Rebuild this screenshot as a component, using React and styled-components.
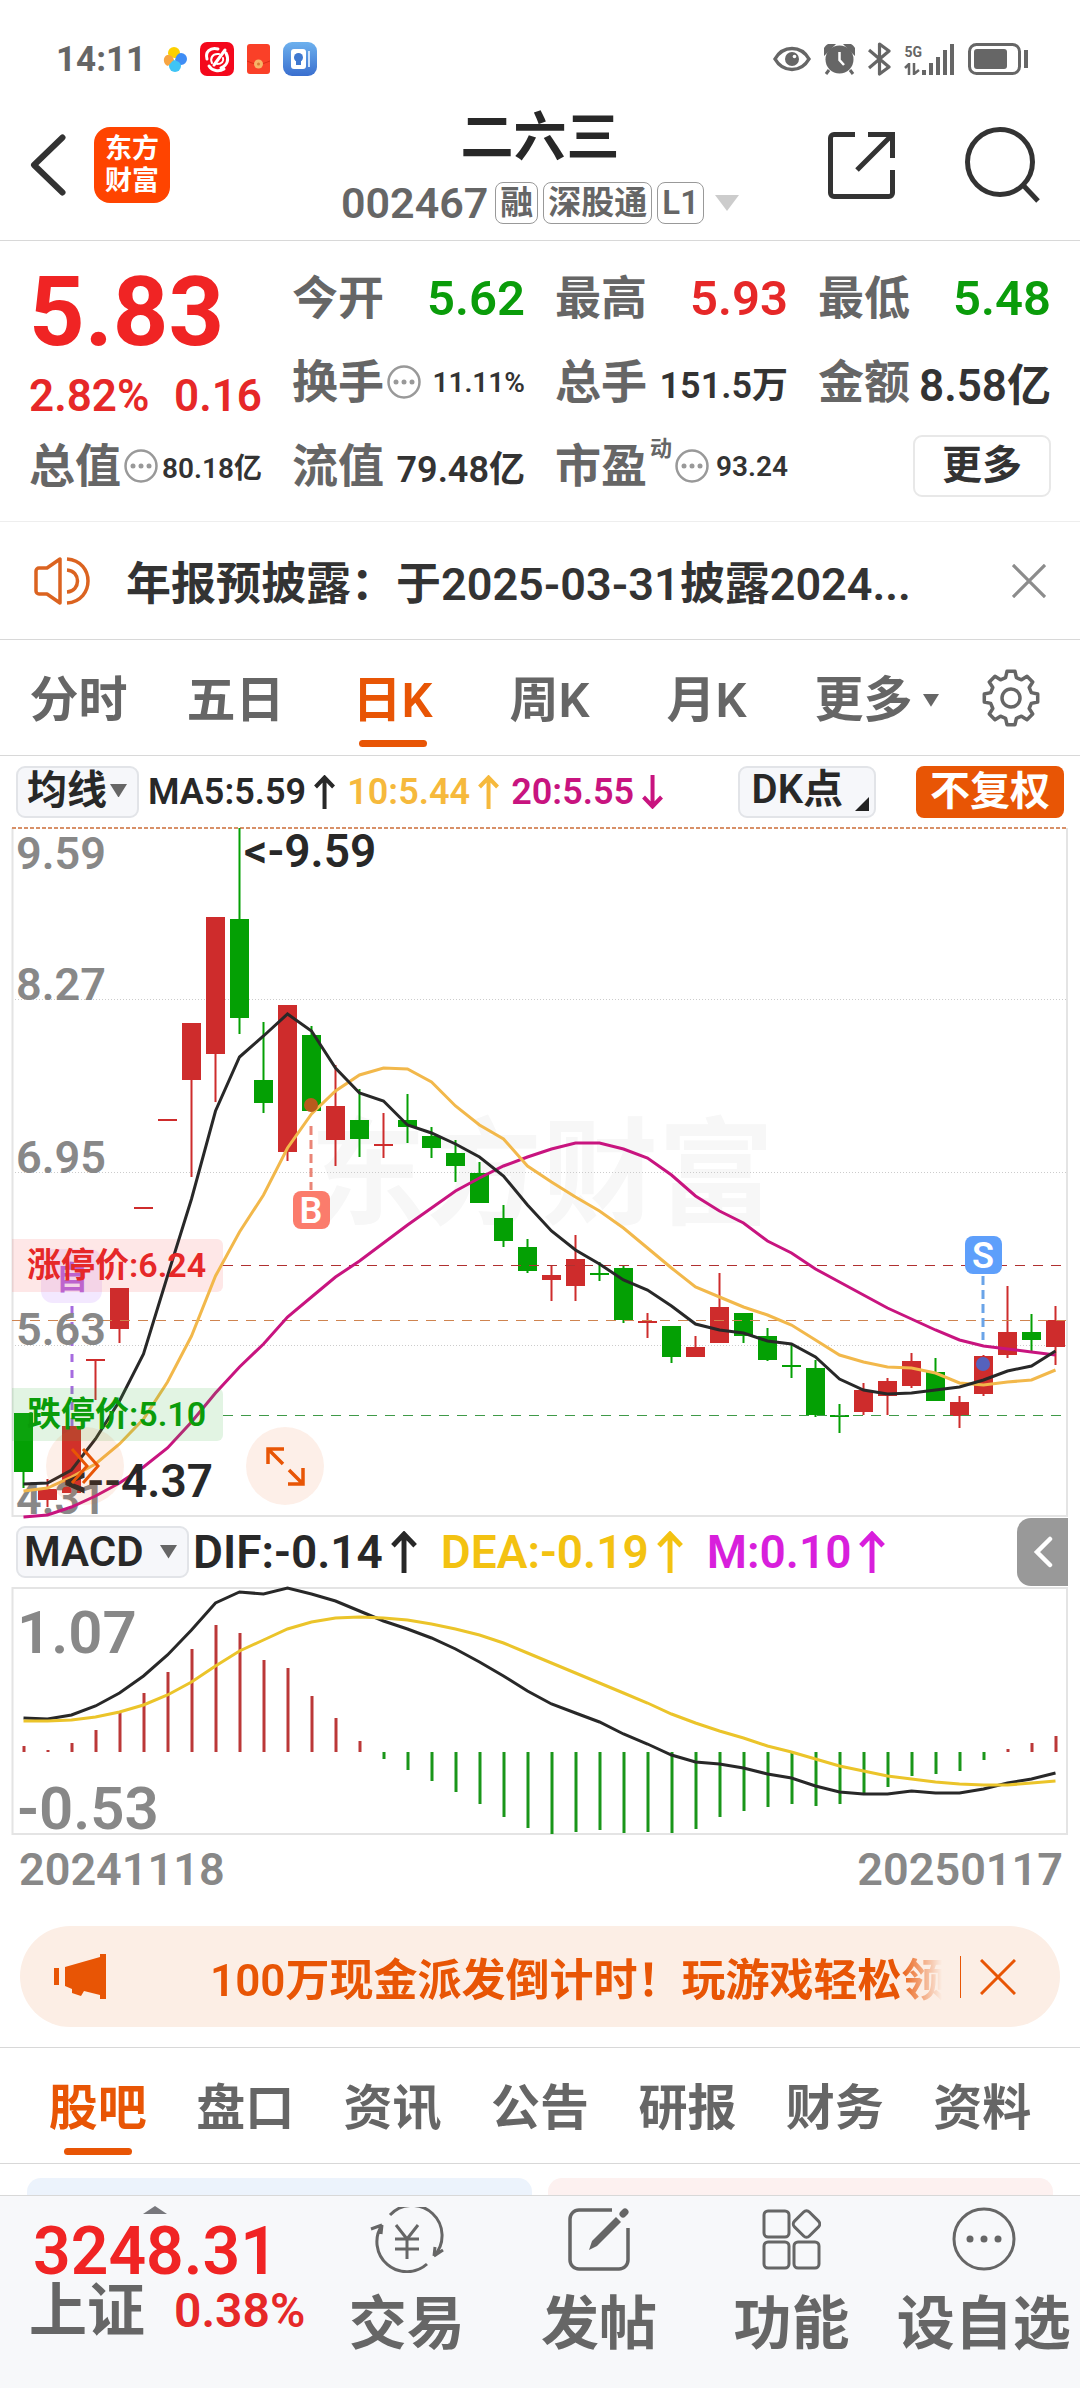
import React from "react";
import styled, { createGlobalStyle } from "styled-components";

const color = {
  ink: "#282828",
  text: "#333333",
  muted: "#666666",
  faint: "#888888",
  line: "#d8d8d8",
  frame: "#e4e4e4",
  up: "#e62828",
  down: "#0a9c0a",
  brand: "#e85505",
  ma10: "#f6b93c",
  ma20: "#c8147f",
  dea: "#f3c211",
  macd: "#d81fdc",
  chip: "#f6f7fa",
};

const GlobalStyle = createGlobalStyle`
  *, *::before, *::after { box-sizing: border-box; }
  body {
    margin: 0;
    background: #fff;
    color: ${color.text};
    font-family: Roboto, "Noto Sans CJK SC", sans-serif;
    font-weight: 600;
  }
  button, select {
    margin: 0;
    padding: 0;
    border: 0;
    background: none;
    color: inherit;
    font: inherit;
    cursor: pointer;
  }
  svg { display: block; flex: none; }
`;

const Page = styled.div`
  display: flex;
  flex-direction: column;
  min-height: 100vh;
`;

/* ---------- status bar ---------- */

const StatusBar = styled.div`
  display: flex;
  align-items: center;
  justify-content: space-between;
  height: 104px;
  padding: 14px 52px 0 56px;
  color: ${color.muted};
`;

const StatusGroup = styled.div`
  display: flex;
  align-items: center;
  gap: 13px;
`;

const Clock = styled.time`
  margin-right: 3px;
  font-size: 35px;
  font-weight: 700;
`;

const Network = styled.div`
  display: flex;
  align-items: flex-end;
`;

const NetworkType = styled.div`
  display: flex;
  flex-direction: column;
  gap: 4px;
  font-size: 14px;
  font-weight: 700;
  line-height: 14px;
`;

/* ---------- header ---------- */

const Header = styled.header`
  display: grid;
  grid-template-columns: 1fr auto 1fr;
  align-items: center;
  height: 137px;
  padding: 0 30px 14px;
  border-bottom: 1px solid ${color.line};
`;

const HeaderSide = styled.div`
  display: flex;
  align-items: center;
  justify-content: ${(p) => (p.$end ? "flex-end" : "flex-start")};
  gap: ${(p) => (p.$end ? 70 : 28)}px;
  padding-right: ${(p) => (p.$end ? 9 : 0)}px;
`;

const AppLogo = styled.a`
  display: grid;
  place-content: center;
  width: 76px;
  height: 76px;
  border-radius: 16px;
  background: #ff4400;
  color: #fff;
  font-size: 27px;
  font-weight: 700;
  line-height: 32px;
  text-decoration: none;
`;

const TitleBlock = styled.div`
  display: flex;
  flex-direction: column;
  align-items: center;
  gap: 13px;
`;

const Title = styled.h1`
  margin: 0;
  color: ${color.ink};
  font-size: 53px;
  font-weight: 700;
  line-height: 62px;
`;

const SubTitle = styled.div`
  display: flex;
  align-items: center;
  gap: 5px;
  color: ${color.muted};
`;

const Code = styled.span`
  margin-right: 2px;
  font-size: 43px;
  line-height: 42px;
`;

const Badge = styled.span`
  padding: 0 4px;
  border: 1px solid #999;
  border-radius: 8px;
  font-size: 33px;
  line-height: 40px;
`;

/* ---------- quote ---------- */

const Quote = styled.section`
  display: grid;
  grid-template-columns: repeat(4, 1fr);
  grid-auto-rows: 84px;
  column-gap: 30px;
  padding: 15px 29px 13px;
  border-bottom: 1px solid #eeeeee;
`;

const PriceBlock = styled.div`
  grid-row: span 2;
  color: ${color.up};
`;

const Price = styled.div`
  color: #f02424;
  font-size: 97px;
  font-weight: 700;
  line-height: 112px;
`;

const Change = styled.div`
  display: flex;
  justify-content: space-between;
  font-size: 44px;
  line-height: 56px;
`;

const Stat = styled.div`
  display: flex;
  align-items: center;
  justify-content: space-between;
  white-space: nowrap;
`;

const StatName = styled.span`
  display: flex;
  align-items: center;
  gap: 3px;
  color: ${color.muted};
  font-size: 46px;
  line-height: 56px;
`;

const Mark = styled.sup`
  align-self: flex-start;
  font-size: 22px;
  line-height: 22px;
`;

const StatValue = styled.span`
  color: ${(p) => p.$color || color.text};
  font-size: ${(p) => p.$size}px;
`;

const MoreButton = styled.button`
  justify-self: end;
  align-self: center;
  width: 138px;
  height: 62px;
  border: 2px solid #e8e8e8;
  border-radius: 9px;
  font-size: 40px;
  line-height: 56px;
`;

/* ---------- notice ---------- */

const Notice = styled.section`
  display: flex;
  align-items: center;
  height: 118px;
  padding: 0 34px;
  border-bottom: 1px solid ${color.line};
`;

const NoticeLink = styled.a`
  flex: 1;
  margin-left: 36px;
  color: inherit;
  font-size: 45px;
  text-decoration: none;
  white-space: nowrap;
`;

/* ---------- tabs ---------- */

const TabBar = styled.nav`
  display: flex;
  padding: 0 ${(p) => p.$inset || 0}px;
  border-top: ${(p) => (p.$topLine ? `1px solid ${color.line}` : "0")};
  border-bottom: 1px solid ${color.line};
`;

const Tab = styled.button`
  display: flex;
  flex: 157 1 0;
  flex-direction: column;
  align-items: center;
  padding: 22px 0 8px;
  color: ${(p) => (p.$active ? color.brand : color.muted)};
  font-size: 49px;
  line-height: 78px;

  &::after {
    content: "";
    width: 68px;
    height: 7px;
    border-radius: 4px;
    background: ${(p) => (p.$active ? color.brand : "transparent")};
  }
`;

const TabText = styled.span`
  position: relative;
`;

const TabCaret = styled.span`
  position: absolute;
  top: 32px;
  left: calc(100% + 10px);
`;

const SettingsButton = styled.button`
  display: flex;
  flex: 138 1 0;
  align-items: center;
  justify-content: center;
`;

/* ---------- indicator rows ---------- */

const IndicatorRow = styled.div`
  display: flex;
  align-items: center;
  height: ${(p) => p.$height}px;
  padding: 0 ${(p) => (p.$flush ? 12 : 16)}px 0 16px;
`;

const Picker = styled.label`
  display: flex;
  align-items: center;
  gap: ${(p) => p.$gap}px;
  height: 52px;
  padding: 0 10px ${(p) => (p.$gap > 10 ? 0 : 2)}px ${(p) => (p.$gap > 10 ? 6 : 9)}px;
  border: 2px solid #e2e4e8;
  border-radius: 9px;
  background: ${color.chip};
  color: ${color.ink};

  select {
    appearance: none;
    outline: 0;
    font-size: ${(p) => (p.$gap > 10 ? 42 : 40)}px;
    line-height: 48px;
  }
`;

const Readings = styled.div`
  display: flex;
  align-items: center;
  gap: ${(p) => p.$gap}px;
  margin-left: ${(p) => p.$indent}px;
  font-size: ${(p) => p.$size}px;
`;

const Reading = styled.span`
  display: flex;
  align-items: center;
  gap: 8px;
  color: ${(p) => p.$color};
  white-space: nowrap;
`;

const RowActions = styled.div`
  display: flex;
  gap: 40px;
  margin-left: auto;
  font-size: 40px;
`;

const DkButton = styled.button`
  display: flex;
  align-items: flex-end;
  gap: 12px;
  height: 52px;
  padding: 0 5px 5px 12px;
  border: 2px solid #e2e4e8;
  border-radius: 9px;
  background: ${color.chip};
  color: ${color.ink};
  line-height: 42px;
`;

const AdjustButton = styled.button`
  height: 52px;
  padding: 0 14px;
  border-radius: 8px;
  background: ${color.brand};
  color: #fff;
  line-height: 50px;
`;

const CollapseButton = styled.button`
  display: flex;
  align-items: center;
  justify-content: center;
  width: 51px;
  height: 68px;
  margin-left: auto;
  border-radius: 14px 0 0 14px;
  background: #999;
`;

/* ---------- charts ---------- */

const ChartBox = styled.div`
  position: relative;
`;

const ChartSvg = styled.svg`
  width: 100%;
  height: auto;
  overflow: visible;

  text { font-family: Roboto, "Noto Sans CJK SC", sans-serif; font-weight: 600; }
`;

const RoundButton = styled.button`
  position: absolute;
  bottom: 12px;
  left: ${(p) => p.$left};
  display: grid;
  place-items: center;
  width: 78px;
  height: 78px;
  border-radius: 50%;
  background: rgba(240, 100, 30, 0.1);
`;

const DateRow = styled.div`
  display: flex;
  justify-content: space-between;
  padding: 0 17px 0 19px;
  color: ${color.faint};
  font-size: 45px;
  line-height: 69px;
`;

/* ---------- banner ---------- */

const Banner = styled.aside`
  display: flex;
  align-items: center;
  height: 101px;
  margin: 22px 20px 20px;
  padding: 0 44px 0 34px;
  border-radius: 52px;
  background: #fceee5;
  color: ${color.brand};
`;

const BannerLink = styled.a`
  flex: 1;
  min-width: 0;
  margin: 0 18px 0 104px;
  overflow: hidden;
  color: inherit;
  font-size: 44px;
  text-decoration: none;
  white-space: nowrap;
  mask-image: linear-gradient(to right, #000 calc(100% - 44px), transparent);
`;

const BannerRule = styled.span`
  width: 1px;
  height: 42px;
  margin-right: 19px;
  background: ${color.brand};
`;

/* ---------- feed and bottom bar ---------- */

const Feed = styled.section`
  display: grid;
  flex: 1;
  grid-template-columns: 1fr 1fr;
  gap: 16px;
  min-height: 29px;
  padding: 14px 27px 0;
`;

const FeedCard = styled.div`
  border-radius: 14px 14px 0 0;
  background: ${(p) => p.$tint};
`;

const BottomBar = styled.footer`
  display: flex;
  height: 193px;
  border-top: 1px solid ${color.line};
  background: #f7f8fa;
`;

const IndexButton = styled.button`
  display: flex;
  flex: 281 1 0;
  flex-direction: column;
  align-items: flex-start;
  padding: 10px 0 0 29px;
  text-align: left;
`;

const IndexCaret = styled.span`
  margin-left: 114px;
`;

const IndexValue = styled.span`
  margin-left: 4px;
  color: #f02424;
  font-size: 66px;
  line-height: 76px;
  white-space: nowrap;
`;

const IndexLine = styled.span`
  display: flex;
  align-items: center;
  gap: 29px;
  color: ${color.muted};
  font-size: 58px;
  line-height: 42px;
  white-space: nowrap;
`;

const IndexChange = styled.span`
  color: ${color.up};
  font-size: 48px;
`;

const NavButton = styled.button`
  display: flex;
  flex: 192 1 0;
  flex-direction: column;
  align-items: center;
  gap: 20px;
  padding-top: 11px;
  color: ${color.muted};
  font-size: 58px;
  line-height: 62px;
  white-space: nowrap;
`;

/* ---------- icons ---------- */

const Caret = ({ size = 17, fill = "#666" }) => (
  <svg width={size} height={size * 0.8} viewBox="0 0 20 16" aria-hidden="true">
    <path d="M0 0h20L10 16z" fill={fill} />
  </svg>
);

const Arrow = ({ down, size = 34 }) => (
  <svg width={size * 0.62} height={size} viewBox="0 0 21 34" fill="none" stroke="currentColor" strokeWidth="4" aria-label={down ? "下降" : "上升"}>
    <path d={down ? "M10.500 0v31M1.500 22l9 9.500 9-9.500" : "M10.500 34V3M1.500 12l9-9.500 9 9.500"} />
  </svg>
);

const InfoDots = () => (
  <svg width="34" height="34" viewBox="0 0 34 34" fill="none" stroke="#999" strokeWidth="2.500" aria-hidden="true">
    <circle cx="17" cy="17" r="15.500" />
    <g fill="#999" stroke="none">
      <circle cx="9" cy="17" r="2.500" />
      <circle cx="17" cy="17" r="2.500" />
      <circle cx="25" cy="17" r="2.500" />
    </g>
  </svg>
);

const Cross = ({ size, stroke, width = 3 }) => (
  <svg width={size} height={size} viewBox="0 0 36 36" fill="none" stroke={stroke} strokeWidth={width} aria-hidden="true">
    <path d="M1 1l34 34M35 1L1 35" />
  </svg>
);

const gearPath = (() => {
  const pts = [];
  const teeth = 8;
  for (let i = 0; i < teeth; i += 1) {
    const base = (i * 2 * Math.PI) / teeth - Math.PI / 2;
    [[-0.26, 21], [-0.15, 27], [0.15, 27], [0.26, 21]].forEach(([a, r]) => {
      pts.push(`${(29 + r * Math.cos(base + a)).toFixed(1)} ${(29 + r * Math.sin(base + a)).toFixed(1)}`);
    });
  }
  return `M${pts.join("L")}Z`;
})();

/* ---------- chart data ---------- */

const px = (i) => 23.5 + 24 * i;

// [rising, high, bodyTop, bodyBottom, low]
const candles = [
  [0, 1414, 1414, 1473, 1489], [1, 1480, 1490, 1501, 1508], [1, 1427, 1427, 1494, 1494], [1, 1360, 1360, 1362, 1401],
  [1, 1289, 1289, 1330, 1344], [1, 1208, 1208, 1210, 1210], [1, 1120, 1120, 1122, 1122], [1, 1024, 1024, 1081, 1178],
  [1, 918, 918, 1055, 1103], [0, 829, 920, 1019, 1035], [0, 1023, 1081, 1104, 1114], [1, 1006, 1006, 1153, 1162],
  [0, 1027, 1036, 1112, 1112], [1, 1066, 1107, 1141, 1167], [0, 1090, 1121, 1140, 1158], [1, 1114, 1145, 1147, 1159],
  [0, 1095, 1121, 1128, 1144], [0, 1128, 1137, 1149, 1159], [0, 1141, 1154, 1167, 1183], [0, 1163, 1174, 1204, 1204],
  [0, 1206, 1219, 1242, 1248], [0, 1240, 1248, 1272, 1274], [1, 1266, 1276, 1281, 1302], [1, 1236, 1260, 1287, 1302],
  [0, 1263, 1274, 1276, 1282], [0, 1267, 1269, 1321, 1324], [1, 1314, 1322, 1324, 1339], [0, 1327, 1327, 1358, 1364],
  [1, 1337, 1348, 1358, 1358], [1, 1274, 1308, 1344, 1344], [0, 1314, 1314, 1337, 1344], [0, 1329, 1337, 1361, 1362],
  [0, 1345, 1366, 1368, 1379], [0, 1361, 1369, 1416, 1418], [0, 1405, 1416, 1418, 1434], [1, 1384, 1391, 1413, 1416],
  [1, 1379, 1382, 1397, 1416], [1, 1354, 1362, 1387, 1389], [0, 1359, 1373, 1402, 1402], [1, 1397, 1403, 1417, 1429],
  [1, 1356, 1357, 1395, 1397], [1, 1287, 1333, 1356, 1359], [0, 1315, 1333, 1341, 1352], [1, 1307, 1321, 1348, 1366],
];

const ma5 = [1485, 1484, 1471, 1440, 1402, 1355, 1277, 1200, 1112, 1058, 1037, 1015, 1032, 1069, 1094, 1102, 1126, 1134, 1145, 1158, 1177, 1206, 1232, 1251, 1265, 1281, 1291, 1307, 1325, 1331, 1334, 1342, 1345, 1358, 1380, 1391, 1395, 1394, 1391, 1388, 1381, 1372, 1367, 1352];
const ma10 = [1492, 1489, 1478, 1465, 1445, 1420, 1383, 1337, 1277, 1233, 1196, 1149, 1115, 1092, 1076, 1069, 1070, 1083, 1107, 1126, 1140, 1167, 1183, 1198, 1212, 1229, 1249, 1269, 1288, 1298, 1308, 1316, 1326, 1341, 1356, 1363, 1368, 1369, 1374, 1384, 1386, 1383, 1381, 1371];
const ma20 = [1518, 1516, 1508, 1497, 1484, 1468, 1449, 1423, 1394, 1368, 1345, 1318, 1298, 1278, 1262, 1244, 1226, 1209, 1192, 1179, 1167, 1158, 1150, 1144, 1144, 1150, 1159, 1176, 1197, 1212, 1224, 1242, 1254, 1270, 1283, 1296, 1309, 1320, 1331, 1341, 1347, 1350, 1353, 1356];
const histogram = [1747, 1751, 1744, 1731, 1714, 1694, 1673, 1650, 1626, 1634, 1661, 1669, 1697, 1719, 1742, 1760, 1771, 1782, 1793, 1805, 1818, 1829, 1835, 1833, 1831, 1834, 1833, 1834, 1830, 1818, 1812, 1808, 1805, 1807, 1805, 1796, 1788, 1777, 1775, 1772, 1761, 1750, 1744, 1737];
const dif = [1719, 1720, 1716, 1707, 1694, 1677, 1656, 1631, 1604, 1593, 1595, 1589, 1595, 1602, 1612, 1622, 1630, 1639, 1650, 1663, 1677, 1692, 1705, 1714, 1723, 1735, 1745, 1756, 1763, 1765, 1769, 1775, 1779, 1787, 1793, 1795, 1795, 1792, 1794, 1794, 1790, 1784, 1780, 1774];
const dea = [1722, 1722, 1721, 1718, 1713, 1706, 1696, 1683, 1667, 1652, 1641, 1630, 1623, 1619, 1618, 1619, 1621, 1625, 1630, 1636, 1644, 1654, 1664, 1674, 1684, 1694, 1704, 1715, 1724, 1732, 1739, 1747, 1753, 1760, 1767, 1772, 1777, 1780, 1783, 1785, 1786, 1786, 1784, 1782];

const Line = ({ data, stroke }) => (
  <polyline points={data.map((y, i) => `${px(i)},${y}`).join(" ")} fill="none" stroke={stroke} strokeWidth="3" />
);

const Signal = ({ x, y, fill, letter }) => (
  <g>
    <rect x={x - 18} y={y} width="37" height="38" rx="8" fill={fill} />
    <text x={x} y={y + 32} fontSize="36" fill="#fff" textAnchor="middle">{letter}</text>
  </g>
);

const PriceChart = () => (
  <ChartSvg viewBox="0 828 1080 690" role="img" aria-label="日K线">
    <text x="310" y="1216" fontSize="116" fill="#f7f7f7">东方财富</text>
    <g stroke="#cccccc" strokeWidth="1" strokeDasharray="1 2">
      <path d="M12 1000.500H1067M12 1173.500H1067M12 1346.500H1067" />
    </g>
    <path d="M12.500 829V1517H1067V829" fill="none" stroke={color.frame} strokeWidth="2" />
    <path d="M12 829H1067" stroke="#d89068" strokeWidth="2" strokeDasharray="4 2" />

    <rect x="41" y="1250" width="61" height="54" rx="12" fill="#f3e8ff" />
    <path d="M72 1307V1430" stroke="#a66be0" strokeWidth="3" strokeDasharray="8 8" />
    <text x="72" y="1290" fontSize="32" fill="#b060e0" textAnchor="middle">自</text>
    <path d="M12 1240H217a6 6 0 0 1 6 6V1287a6 6 0 0 1-6 6H12z" fill="rgba(250,120,120,.18)" />

    {candles.map(([rising, high, top, bottom, low], i) => (
      <g key={i} fill={rising ? "#ce2c2c" : "#04a004"}>
        <rect x={px(i) - 1} y={high} width="2" height={low - high} />
        <rect x={px(i) - 9.5} y={top} width="19" height={bottom - top} />
      </g>
    ))}

    <g strokeWidth="1" fill="none" strokeDasharray="10 8">
      <path d="M223 1266.500H1067" stroke="#b03030" />
      <path d="M12 1321.500H1067" stroke="#cf8450" />
      <path d="M223 1416.500H1067" stroke="#3f9a48" />
    </g>

    <g fontSize="45" fill={color.faint}>
      <text x="16" y="870">9.59</text>
      <text x="16" y="1001">8.27</text>
      <text x="16" y="1174">6.95</text>
      <text x="16" y="1346">5.63</text>
      <text x="16" y="1515">4.31</text>
    </g>

    <Line data={ma20} stroke={color.ma20} />
    <Line data={ma10} stroke="#f2b84b" />
    <Line data={ma5} stroke={color.ink} />

    <path d="M12 1389H217a6 6 0 0 1 6 6V1436a6 6 0 0 1-6 6H12z" fill="rgba(60,180,70,.15)" />
    <g fontSize="34">
      <text x="27" y="1278" fill={color.up}>涨停价:6.24</text>
      <text x="27" y="1427" fill={color.down}>跌停价:5.10</text>
    </g>
    <g fontSize="46" fill={color.ink}>
      <text x="244" y="868">&lt;-9.59</text>
      <text x="213" y="1498" textAnchor="end">&lt;--4.37</text>
    </g>

    <circle cx="311" cy="1106" r="7" fill="#b85a1c" />
    <path d="M311 1127V1191" stroke="#ea8577" strokeWidth="3" strokeDasharray="9 5" />
    <Signal x={311} y={1192} fill="#fb7c6c" letter="B" />
    <circle cx="983" cy="1365" r="7" fill="#5562bd" />
    <path d="M983 1277V1341" stroke="#6aa4e8" strokeWidth="3" strokeDasharray="9 5" />
    <Signal x={983} y={1237} fill="#5e9ffb" letter="S" />
  </ChartSvg>
);

const MacdChart = () => (
  <ChartSvg viewBox="0 1588 1080 248" role="img" aria-label="MACD">
    <rect x="12.500" y="1589" width="1054.500" height="246" fill="none" stroke={color.frame} strokeWidth="2" />
    <g fontSize="60" fill={color.faint}>
      <text x="17" y="1654">1.07</text>
      <text x="17" y="1830">-0.53</text>
    </g>
    {histogram.map((y, i) => (
      <rect key={i} x={px(i) - 1} y={Math.min(y, 1753)} width="3" height={Math.abs(1753 - y)} fill={y < 1753 ? "#bb3838" : "#1a961a"} />
    ))}
    <Line data={dif} stroke={color.ink} />
    <Line data={dea} stroke="#ebc42a" />
  </ChartSvg>
);

/* ---------- page data ---------- */

const stats = [
  { name: "今开", value: "5.62", size: 49, tone: color.down },
  { name: "最高", value: "5.93", size: 49, tone: color.up },
  { name: "最低", value: "5.48", size: 49, tone: color.down },
  { name: "换手", info: true, value: "11.11%", size: 28 },
  { name: "总手", value: "151.5万", size: 36 },
  { name: "金额", value: "8.58亿", size: 44 },
  { name: "总值", info: true, value: "80.18亿", size: 28 },
  { name: "流值", value: "79.48亿", size: 36 },
  { name: "市盈", mark: "动", info: true, value: "93.24", size: 28 },
];

const periods = ["分时", "五日", "日K", "周K", "月K"];
const sections = ["股吧", "盘口", "资讯", "公告", "研报", "财务", "资料"];

export default function App() {
  return (
    <>
      <GlobalStyle />
      <Page>
        <StatusBar>
          <StatusGroup>
            <Clock>14:11</Clock>
            <svg width="25" height="25" viewBox="0 0 25 25">
              <path d="M6 6a6 6 0 0 1 12 0c0 3-2 5-6 5C9 10 6 9 6 6z" fill="#fdd000" />
              <path d="M19 6a6 6 0 0 1 0 12c-3 0-5-2-6-5 1-4 3-7 6-7z" fill="#3f8df5" />
              <path d="M19 19a6 6 0 0 1-12 0c0-4 2-6 5-6 4 1 7 3 7 6z" fill="#3fc4f5" />
              <path d="M6 19A6 6 0 0 1 5 8c4 0 6 1 7 5-2 1-3 3-6 6z" fill="#f7a542" />
            </svg>
            <svg width="34" height="34" viewBox="0 0 34 34">
              <rect width="34" height="34" rx="7" fill="#f4081c" />
              <g fill="none" stroke="#fff" strokeWidth="3" strokeLinecap="round">
                <path d="M18 7C10 5 5 10 7 17M9 24c3 5 10 6 15 3M26 11c3 6 2 12-5 15M25 8L14 23" />
                <path d="M19 12c-7-1-9 5-7 9M17 22c5 0 7-3 6-6" strokeWidth="2" />
              </g>
            </svg>
            <svg width="23" height="30" viewBox="0 0 23 30">
              <rect width="23" height="30" rx="3" fill="#fa4028" />
              <path d="M0 17q11 6 23 0" fill="none" stroke="#d92c18" strokeWidth="1" />
              <circle cx="11.500" cy="20" r="4.500" fill="#f7b468" />
              <circle cx="11.500" cy="20" r="1.500" fill="#d97b35" />
            </svg>
            <svg width="34" height="34" viewBox="0 0 34 34">
              <defs>
                <linearGradient id="blueTile" x1="0" y1="0" x2="0" y2="1">
                  <stop offset="0" stopColor="#6db1ee" />
                  <stop offset="1" stopColor="#3a6fcf" />
                </linearGradient>
              </defs>
              <rect width="34" height="34" rx="9" fill="url(#blueTile)" />
              <rect x="8" y="7" width="15" height="20" rx="3" fill="#fff" />
              <path d="M25 9h2v16h-2z" fill="#cfe2fa" />
              <circle cx="15.500" cy="15.500" r="4.500" fill="#3f78d0" />
              <path d="M13 19h5v4h-5z" fill="#3f78d0" />
            </svg>
          </StatusGroup>
          <StatusGroup>
            <svg width="38" height="26" viewBox="0 0 38 26" fill="none" stroke="#666" strokeWidth="3.500">
              <path d="M2 13C10-1 28-1 36 13C28 27 10 27 2 13z" />
              <circle cx="19" cy="13" r="7" fill="#666" stroke="none" />
              <circle cx="21.500" cy="10.500" r="1.800" fill="#fff" stroke="none" />
            </svg>
            <svg width="31" height="31" viewBox="0 0 31 31">
              <circle cx="15.500" cy="15.500" r="14" fill="#666" />
              <path d="M1 9C0 4 4 0 9 1zM30 9c1-5-3-9-8-8zM5 26l-3 4M26 26l3 4" fill="#666" stroke="#666" strokeWidth="3" />
              <path d="M15.500 8v8l4.500 5" fill="none" stroke="#fff" strokeWidth="2.500" />
            </svg>
            <svg width="23" height="34" viewBox="0 0 23 34" fill="none" stroke="#666" strokeWidth="3.200" strokeLinejoin="round">
              <path d="M1 8l20 17-9.500 7V2L21 9 1 26" />
            </svg>
            <Network>
              <NetworkType>
                5G
                <svg width="17" height="12" viewBox="0 0 17 12" fill="none" stroke="#666" strokeWidth="2.500">
                  <path d="M1 5l4-4v11M10 0v11l5-4" />
                </svg>
              </NetworkType>
              <svg width="33" height="31" viewBox="0 0 33 31" fill="#666">
                <path d="M0 26h4v5H0zM7 19h4v12H7zM14 13h4v18h-4zM21 6h4v25h-4zM28 0h4v31h-4z" />
              </svg>
            </Network>
            <svg width="60" height="32" viewBox="0 0 60 32">
              <rect x="1.500" y="1.500" width="50" height="29" rx="7" fill="none" stroke="#666" strokeWidth="3" />
              <rect x="6" y="6" width="33" height="20" rx="3" fill="#666" />
              <path d="M56 7h4v18h-4z" fill="#666" />
            </svg>
          </StatusGroup>
        </StatusBar>

        <Header>
          <HeaderSide>
            <button type="button" aria-label="返回">
              <svg width="36" height="62" viewBox="0 0 36 62" fill="none" stroke="#333" strokeWidth="6" strokeLinejoin="round" strokeLinecap="round">
                <path d="M32.500 3.500L4 31l28.500 27.500" />
              </svg>
            </button>
            <AppLogo href="#home">
              <span>东方</span>
              <span>财富</span>
            </AppLogo>
          </HeaderSide>
          <TitleBlock>
            <Title>二六三</Title>
            <SubTitle>
              <Code>002467</Code>
              <Badge>融</Badge>
              <Badge>深股通</Badge>
              <Badge>L1</Badge>
              <svg width="30" height="16" viewBox="0 0 30 16">
                <path d="M6 0h24L18 16z" fill="#ccc" />
              </svg>
            </SubTitle>
          </TitleBlock>
          <HeaderSide $end>
            <button type="button" aria-label="分享">
              <svg width="67" height="67" viewBox="0 0 67 67" fill="none" stroke="#333" strokeWidth="5">
                <path d="M27 2.500H6a3.500 3.500 0 0 0-3.500 3.500v55A3.500 3.500 0 0 0 6 64.500h55a3.500 3.500 0 0 0 3.500-3.500V38M40 2.500h24.500V26M64 3L29 38" />
              </svg>
            </button>
            <button type="button" aria-label="搜索">
              <svg width="76" height="76" viewBox="0 0 76 76" fill="none" stroke="#333" strokeWidth="5">
                <circle cx="35" cy="35" r="32.500" />
                <path d="M58 58l15 16" />
              </svg>
            </button>
          </HeaderSide>
        </Header>

        <Quote>
          <PriceBlock>
            <Price>5.83</Price>
            <Change>
              <span>2.82%</span>
              <span>0.16</span>
            </Change>
          </PriceBlock>
          {stats.map((s) => (
            <Stat key={s.name}>
              <StatName>
                {s.name}
                {s.mark && <Mark>{s.mark}</Mark>}
                {s.info && <InfoDots />}
              </StatName>
              <StatValue $size={s.size} $color={s.tone}>{s.value}</StatValue>
            </Stat>
          ))}
          <MoreButton type="button">更多</MoreButton>
        </Quote>

        <Notice>
          <svg width="56" height="50" viewBox="0 0 56 50" fill="none" stroke="#db6320" strokeWidth="3.500">
            <path d="M26 3v44L13 38H5a3 3 0 0 1-3-3V15a3 3 0 0 1 3-3h8z" strokeLinejoin="round" />
            <path d="M33 14c14 1 14 21 0 22M33 3c28 2 28 42 0 44" />
          </svg>
          <NoticeLink href="#notice">年报预披露：于2025-03-31披露2024...</NoticeLink>
          <button type="button" aria-label="关闭公告">
            <Cross size={34} stroke="#8c8c8c" width={3.5} />
          </button>
        </Notice>

        <TabBar>
          {periods.map((p) => (
            <Tab key={p} type="button" $active={p === "日K"}>{p}</Tab>
          ))}
          <Tab type="button">
            <TabText>
              更多
              <TabCaret><Caret size={16} /></TabCaret>
            </TabText>
          </Tab>
          <SettingsButton type="button" aria-label="设置">
            <svg width="58" height="58" viewBox="0 0 58 58" fill="none" stroke="#666" strokeWidth="3.500" strokeLinejoin="round">
              <path d={gearPath} />
              <circle cx="29" cy="29" r="9" />
            </svg>
          </SettingsButton>
        </TabBar>

        <IndicatorRow $height={71}>
          <Picker $gap={3}>
            <select aria-label="主图指标"><option>均线</option></select>
            <Caret />
          </Picker>
          <Readings $size={36} $gap={12} $indent={9}>
            <Reading $color={color.ink}>MA5:5.59<Arrow /></Reading>
            <Reading $color={color.ma10}>10:5.44<Arrow /></Reading>
            <Reading $color={color.ma20}>20:5.55<Arrow down /></Reading>
          </Readings>
          <RowActions>
            <DkButton type="button">
              DK点
              <svg width="14" height="14" viewBox="0 0 14 14"><path d="M14 0v14H0z" fill="#222" /></svg>
            </DkButton>
            <AdjustButton type="button">不复权</AdjustButton>
          </RowActions>
        </IndicatorRow>

        <ChartBox>
          <PriceChart />
          <RoundButton type="button" aria-label="向后" $left="4.3%">
            <svg width="30" height="36" viewBox="0 0 30 36" fill="none" stroke={color.brand} strokeWidth="3">
              <path d="M2 1l15 17L2 35M13 1l15 17-15 17" />
            </svg>
          </RoundButton>
          <RoundButton type="button" aria-label="全屏" $left="22.8%">
            <svg width="39" height="39" viewBox="0 0 39 39" fill="none" stroke={color.brand} strokeWidth="3.500">
              <path d="M18 2H2v15M2 2l15 15M37 21v16H22M37 37L23 23" />
            </svg>
          </RoundButton>
        </ChartBox>

        <IndicatorRow $height={70} $flush>
          <Picker $gap={16}>
            <select aria-label="副图指标"><option>MACD</option></select>
            <Caret />
          </Picker>
          <Readings $size={46} $gap={24} $indent={4}>
            <Reading $color={color.ink}>DIF:-0.14<Arrow size={42} /></Reading>
            <Reading $color={color.dea}>DEA:-0.19<Arrow size={42} /></Reading>
            <Reading $color={color.macd}>M:0.10<Arrow size={42} /></Reading>
          </Readings>
          <CollapseButton type="button" aria-label="展开侧栏">
            <svg width="20" height="32" viewBox="0 0 20 32" fill="none" stroke="#fff" strokeWidth="4.500" strokeLinecap="round">
              <path d="M17 3L4 16l13 13" />
            </svg>
          </CollapseButton>
        </IndicatorRow>

        <MacdChart />
        <DateRow>
          <time>20241118</time>
          <time>20250117</time>
        </DateRow>

        <Banner>
          <svg width="52" height="45" viewBox="0 0 52 45" fill={color.brand}>
            <path d="M0 14h5v17H0zM11 13L46 3V0h6v45h-6v-4l-16-4-3 5-9-3v-4l-7-3z" />
          </svg>
          <BannerLink href="#activity">100万现金派发倒计时！玩游戏轻松领</BannerLink>
          <BannerRule />
          <button type="button" aria-label="关闭活动">
            <Cross size={36} stroke={color.brand} />
          </button>
        </Banner>

        <TabBar $inset={24} $topLine>
          {sections.map((s) => (
            <Tab key={s} type="button" $active={s === "股吧"}>{s}</Tab>
          ))}
        </TabBar>

        <Feed>
          <FeedCard $tint="#ecf3fc" />
          <FeedCard $tint="#fdf1f0" />
        </Feed>

        <BottomBar>
          <IndexButton type="button">
            <IndexCaret>
              <svg width="24" height="8" viewBox="0 0 24 8"><path d="M12 0l12 8H0z" fill="#77777c" /></svg>
            </IndexCaret>
            <IndexValue>3248.31</IndexValue>
            <IndexLine>
              上证
              <IndexChange>0.38%</IndexChange>
            </IndexLine>
          </IndexButton>
          <NavButton type="button">
            <svg width="74" height="66" viewBox="0 0 74 66" fill="none" stroke="#666" strokeWidth="3">
              <path d="M20 8a30 30 0 0 1 44 41l9-6M64 49l1-9M1 22l11-4M57 57A30 30 0 0 1 12 18l-1 9" />
              <path d="M26 18l11 14 11-14M37 32v20M25 32h24M25 42h24" />
            </svg>
            交易
          </NavButton>
          <NavButton type="button">
            <svg width="62" height="66" viewBox="0 0 62 66" fill="none" stroke="#666" strokeWidth="3.500">
              <path d="M44 3H11a9 9 0 0 0-9 9v41a9 9 0 0 0 9 9h40a9 9 0 0 0 9-9V21" />
              <path d="M21 43l3-9 24-24 5 5-24 24z" fill="#666" stroke="none" />
              <path d="M55 7l2-2" strokeWidth="7" strokeLinecap="round" />
            </svg>
            发帖
          </NavButton>
          <NavButton type="button">
            <svg width="60" height="66" viewBox="0 0 60 66" fill="none" stroke="#666" strokeWidth="3">
              <rect x="3" y="4" width="25" height="26" rx="4" />
              <rect x="3" y="35" width="25" height="26" rx="4" />
              <rect x="33" y="35" width="25" height="26" rx="4" />
              <rect x="35" y="6.500" width="21" height="21" rx="4" transform="rotate(45 45.500 17)" />
            </svg>
            功能
          </NavButton>
          <NavButton type="button">
            <svg width="64" height="66" viewBox="0 0 64 66" fill="none" stroke="#666" strokeWidth="3">
              <circle cx="32" cy="32" r="30" />
              <g fill="#666" stroke="none">
                <circle cx="18" cy="32" r="3.500" />
                <circle cx="32" cy="32" r="3.500" />
                <circle cx="46" cy="32" r="3.500" />
              </g>
            </svg>
            设自选
          </NavButton>
        </BottomBar>
      </Page>
    </>
  );
}
